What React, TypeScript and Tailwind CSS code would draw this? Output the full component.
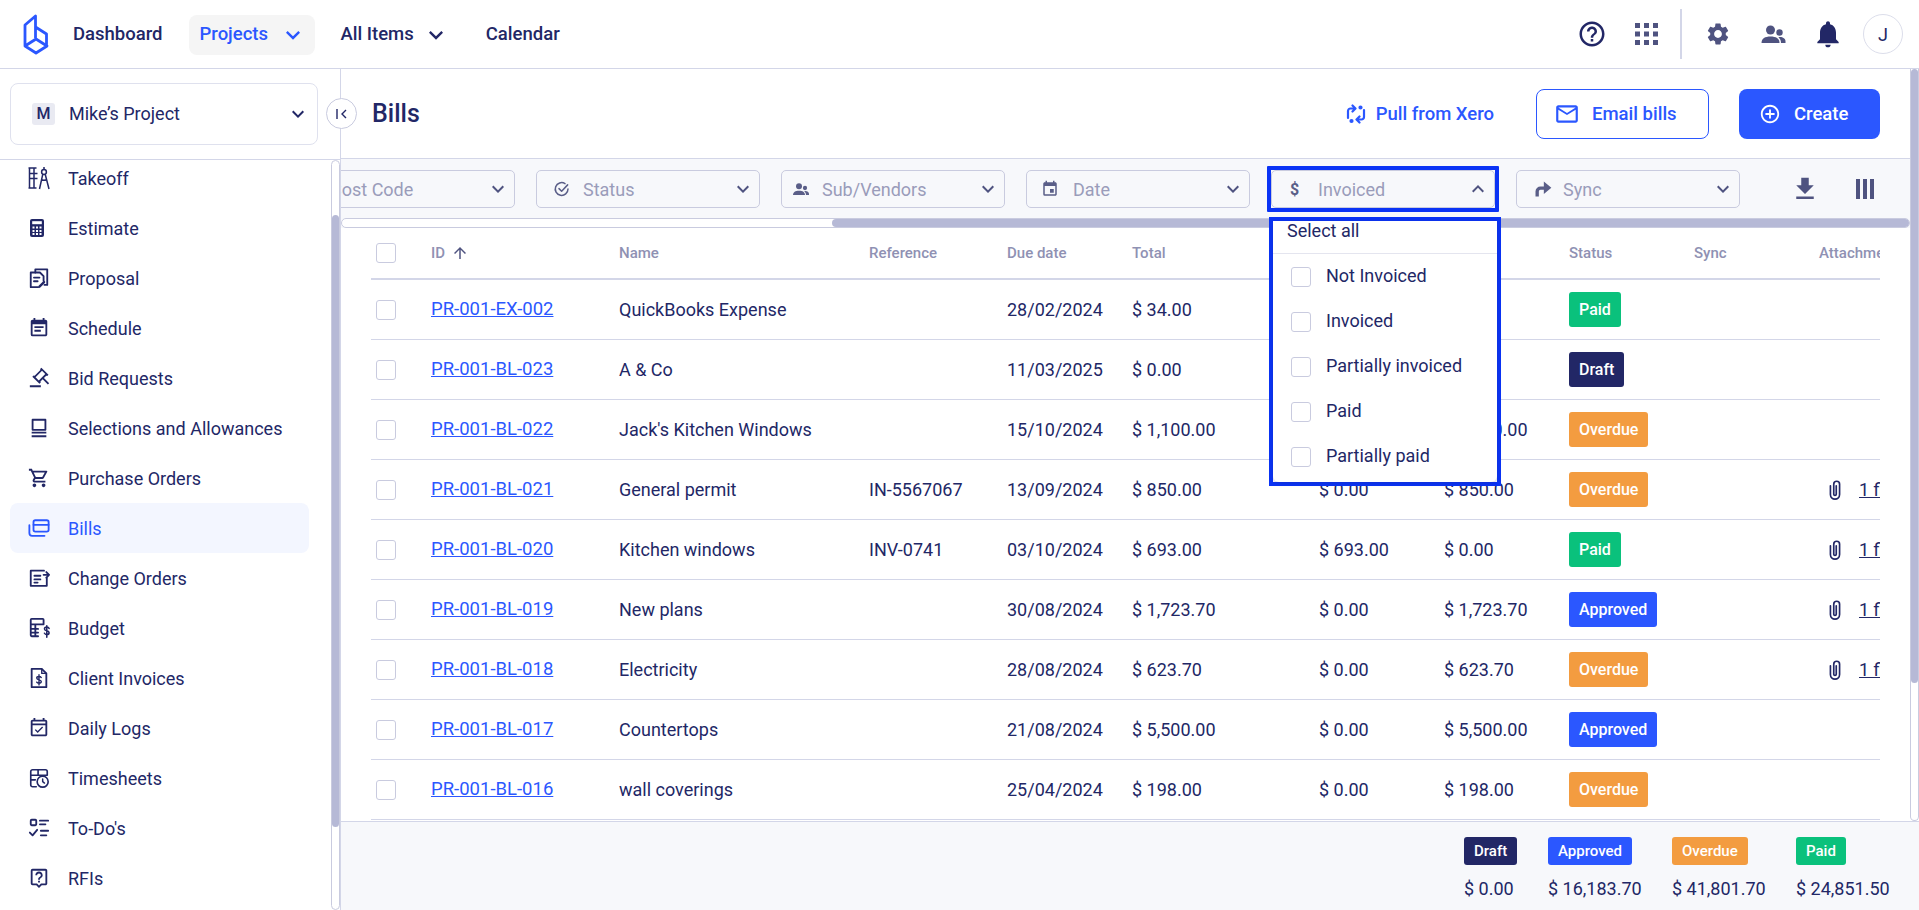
import type { ReactNode } from "react";
import {
  MdKeyboardArrowDown,
  MdKeyboardArrowUp,
  MdHelpOutline,
  MdSettings,
  MdNotifications,
  MdOutlineShoppingCart,
  MdEventNote,
  MdOutlineEventAvailable,
  MdOutlineLiveHelp,
  MdFileDownload,
  MdEvent,
  MdOutlineMailOutline,
  MdOutlineAddCircleOutline,
  MdArrowUpward,
} from "react-icons/md";
import { RiAuctionLine } from "react-icons/ri";

const Svg = ({ children, className = "h-[22px] w-[22px]" }: { children: ReactNode; className?: string }) => (
  <svg
    viewBox="0 0 24 24"
    fill="none"
    stroke="currentColor"
    strokeWidth="2"
    strokeLinecap="round"
    strokeLinejoin="round"
    className={className}
  >
    {children}
  </svg>
);

const TakeoffIcon = () => (
  <svg viewBox="0 0 24 24" fill="none" stroke="currentColor" strokeWidth="1.5" className="-ml-[1px] h-[24px] w-[24px]">
    <path d="M1.500 2h8M1.500 22h8M2.500 2v20M7 2v20M7 7.500h3.500M7 12.500h3.500M2.500 7.500H7M2.500 12.500H7" />
    <circle cx="17" cy="6" r="2.400" />
    <path d="M17 1v2.600M15.800 8.200L12.500 23M18.200 8.200L22 23M14.300 13.500c1.800 1 3.600 1 5.400 0" />
  </svg>
);
const EstimateIcon = () => (
  <svg viewBox="0 0 14 18" className="ml-[2px] h-[18px] w-[14px]">
    <rect width="14" height="18" rx="2" fill="currentColor" />
    <rect x="2.200" y="2.200" width="9.600" height="3" fill="#fff" />
    <path
      d="M2.500 7.500h2v2h-2zM6 7.500h2v2H6zM9.500 7.500h2v2h-2zM2.500 11h2v2h-2zM6 11h2v2H6zM9.500 11h2v2h-2zM2.500 14h2v2h-2zM6 14h2v2H6zM9.500 14h2v2h-2z"
      fill="#fff"
    />
  </svg>
);
const ProposalIcon = () => (
  <Svg>
    <path d="M8 6V2.500h13v17h-3" />
    <path d="M11 22H3V6h10l4 4v5" />
    <path d="M6.500 11.500h6M6.500 15.500h4" />
    <path d="M12.500 21.500l5-5" strokeWidth="2.600" />
  </Svg>
);
const SelectionsIcon = () => (
  <Svg>
    <path d="M5 3h14v11H5zM4 17h16M4 21h16" strokeLinecap="butt" />
  </Svg>
);
const BillsIcon = () => (
  <Svg>
    <rect x="6" y="3.500" width="16.500" height="12.500" rx="2" />
    <path d="M6 8.500h16.500M1.500 9v8.500a3 3 0 0 0 3 3H18" />
  </Svg>
);
const ChangeOrdersIcon = () => (
  <Svg>
    <path d="M20.500 12v8.500H3V4h14.500" />
    <path d="M7 9.500h6.500M7 13.500h6.500M7 17h3.500" />
    <path d="M23 8.500h-6m3-3l3 3-3 3" />
  </Svg>
);
const BudgetIcon = () => (
  <Svg>
    <path d="M11 21H4a1 1 0 0 1-1-1V3a1 1 0 0 1 1-1h12a1 1 0 0 1 1 1v5H3M3 13h8M3 17h8M8 8v13" />
    <path d="M23 12.500c-.5-1-1.500-1.500-2.500-1.500-1.400 0-2.500.8-2.500 2 0 2.800 5 1.400 5 4.200 0 1.200-1.100 2-2.500 2-1.100 0-2-.5-2.500-1.500M20.500 9.500V22" strokeWidth="1.700" />
  </Svg>
);
const InvoiceIcon = () => (
  <Svg>
    <path d="M4 2h11l5 5v15H4z" />
    <path d="M15 2v5h5" strokeWidth="1.500" />
    <path d="M14.500 11.500c-.5-.8-1.400-1.200-2.500-1.200-1.400 0-2.500.7-2.500 1.800 0 2.500 5 1.300 5 3.800 0 1.100-1.100 1.800-2.500 1.800-1.100 0-2-.4-2.500-1.200M12 8.500v11" strokeWidth="1.500" />
  </Svg>
);
const TimesheetIcon = () => (
  <Svg>
    <path d="M9 21.500H5a2 2 0 0 1-2-2V5a2 2 0 0 1 2-2h14a2 2 0 0 1 2 2v4H3M3 14h5M11 3v6" strokeWidth="1.800" />
    <circle cx="16" cy="16" r="6" strokeWidth="1.800" />
    <path d="M16 13v3l2 1.500" strokeWidth="1.600" />
  </Svg>
);
const TodoIcon = () => (
  <Svg>
    <rect x="3" y="3" width="6" height="6" rx="1" />
    <path d="M13 4h9M13 8h6M2 17l3 3 5-6M14 15h8M14 20h6" />
  </Svg>
);
const ClipIcon = () => (
  <svg viewBox="0 0 16 24" fill="none" stroke="currentColor" strokeWidth="2" strokeLinecap="round" className="h-[20px] w-[14px]">
    <path d="M2.500 7v10.500a5.500 5.500 0 0 0 11 0V5a3.500 3.500 0 0 0-7 0v12a1.500 1.500 0 0 0 3 0V7" />
  </svg>
);
const StatusCheck = () => (
  <Svg className="h-[18px] w-[18px]">
    <path d="M20 12a8.500 8.500 0 1 1-4-7.200" />
    <path d="M8 11.500l3.500 3.500 8-8.500" />
  </Svg>
);
const SyncArrow = () => (
  <svg viewBox="0 0 24 24" fill="currentColor" className="h-[20px] w-[20px]">
    <path d="M13 3l9 7.500-9 7.500v-5H9a2 2 0 0 0-2 2v6H3v-6a6 6 0 0 1 6-6h4z" />
  </svg>
);
const ColumnsIcon = () => (
  <svg viewBox="0 0 18 20" fill="currentColor" className="h-[20px] w-[18px]">
    <path d="M0 0h4v20H0zM7 0h4v20H7zM14 0h4v20h-4z" />
  </svg>
);
const XeroIcon = () => (
  <svg viewBox="0 0 20 20" fill="none" stroke="currentColor" strokeWidth="2.200" strokeLinecap="round" strokeLinejoin="round" className="h-[20px] w-[20px]">
    <path d="M2 14V7a2.500 2.500 0 0 1 2.500-2.500H9M6.500 1.500L9.500 4.500 6.500 7.500" />
    <path d="M18 6v7a2.500 2.500 0 0 1-2.500 2.500H11M13.500 12.500l-3 3 3 3" />
    <circle cx="14.500" cy="3.500" r="1" fill="currentColor" />
    <circle cx="5.500" cy="17" r="1" fill="currentColor" />
  </svg>
);
const PeopleIcon = ({ className }: { className: string }) => (
  <svg viewBox="0 0 24 18" fill="currentColor" className={className}>
    <circle cx="9" cy="5" r="4.500" />
    <path d="M0 18c0-4.500 3.500-6.500 9-6.500s9 2 9 6.500z" />
    <circle cx="18" cy="7.500" r="3.200" />
    <path d="M19.500 18c0-2.300-.8-4.500-2.700-5.800 3.600-.8 7.200 1 7.200 4V18z" />
  </svg>
);
const AppsIcon = () => (
  <svg viewBox="0 0 23 22" fill="currentColor" className="h-[22px] w-[23px]">
    <path d="M0 0h5v5H0zM9 0h5v5H9zM18 0h5v5h-5zM0 8.500h5v5H0zM9 8.500h5v5H9zM18 8.500h5v5h-5zM0 17h5v5H0zM9 17h5v5H9zM18 17h5v5h-5z" />
  </svg>
);
const Logo = () => (
  <svg viewBox="0 0 26 41" fill="none" stroke="#2b57ff" strokeWidth="2.800" strokeLinejoin="round" className="h-[41px] w-[26px]">
    <path d="M13 39L2 32l11-7 11 7zM2 32V11L12.500 2v22M12.500 13l11 7v12" />
  </svg>
);

const sideItems: { label: string; icon: ReactNode; active?: boolean }[] = [
  { label: "Takeoff", icon: <TakeoffIcon /> },
  { label: "Estimate", icon: <EstimateIcon /> },
  { label: "Proposal", icon: <ProposalIcon /> },
  { label: "Schedule", icon: <MdEventNote className="h-[22px] w-[22px]" /> },
  { label: "Bid Requests", icon: <RiAuctionLine className="h-[22px] w-[22px]" /> },
  { label: "Selections and Allowances", icon: <SelectionsIcon /> },
  { label: "Purchase Orders", icon: <MdOutlineShoppingCart className="h-[22px] w-[22px]" /> },
  { label: "Bills", icon: <BillsIcon />, active: true },
  { label: "Change Orders", icon: <ChangeOrdersIcon /> },
  { label: "Budget", icon: <BudgetIcon /> },
  { label: "Client Invoices", icon: <InvoiceIcon /> },
  { label: "Daily Logs", icon: <MdOutlineEventAvailable className="h-[22px] w-[22px]" /> },
  { label: "Timesheets", icon: <TimesheetIcon /> },
  { label: "To-Do's", icon: <TodoIcon /> },
  { label: "RFIs", icon: <MdOutlineLiveHelp className="h-[22px] w-[22px]" /> },
];

const badgeColors: Record<string, string> = {
  Paid: "bg-[#0ac17c]",
  Draft: "bg-[#222766]",
  Overdue: "bg-[#f39c40]",
  Approved: "bg-[#2b57ff]",
};

const rows = [
  { id: "PR-001-EX-002", name: "QuickBooks Expense", ref: "", due: "28/02/2024", total: "$ 34.00", paid: "", bal: "", status: "Paid", file: false },
  { id: "PR-001-BL-023", name: "A & Co", ref: "", due: "11/03/2025", total: "$ 0.00", paid: "", bal: "", status: "Draft", file: false },
  { id: "PR-001-BL-022", name: "Jack's Kitchen Windows", ref: "", due: "15/10/2024", total: "$ 1,100.00", paid: "", bal: "$ 1,100.00", status: "Overdue", file: false },
  { id: "PR-001-BL-021", name: "General permit", ref: "IN-5567067", due: "13/09/2024", total: "$ 850.00", paid: "$ 0.00", bal: "$ 850.00", status: "Overdue", file: true },
  { id: "PR-001-BL-020", name: "Kitchen windows", ref: "INV-0741", due: "03/10/2024", total: "$ 693.00", paid: "$ 693.00", bal: "$ 0.00", status: "Paid", file: true },
  { id: "PR-001-BL-019", name: "New plans", ref: "", due: "30/08/2024", total: "$ 1,723.70", paid: "$ 0.00", bal: "$ 1,723.70", status: "Approved", file: true },
  { id: "PR-001-BL-018", name: "Electricity", ref: "", due: "28/08/2024", total: "$ 623.70", paid: "$ 0.00", bal: "$ 623.70", status: "Overdue", file: true },
  { id: "PR-001-BL-017", name: "Countertops", ref: "", due: "21/08/2024", total: "$ 5,500.00", paid: "$ 0.00", bal: "$ 5,500.00", status: "Approved", file: false },
  { id: "PR-001-BL-016", name: "wall coverings", ref: "", due: "25/04/2024", total: "$ 198.00", paid: "$ 0.00", bal: "$ 198.00", status: "Overdue", file: false },
];

const totals = [
  { label: "Draft", value: "$ 0.00", width: "w-[54px]" },
  { label: "Approved", value: "$ 16,183.70", width: "w-[94px]" },
  { label: "Overdue", value: "$ 41,801.70", width: "w-[94px]" },
  { label: "Paid", value: "$ 24,851.50", width: "w-[94px]" },
];

const Checkbox = () => (
  <span className="block h-[20px] w-[20px] rounded-[3px] border border-[#c9cbdf] bg-white" />
);

function FilterSelect({
  label,
  icon,
  open,
  iconBox = "w-[30px]",
}: {
  label: string;
  icon?: ReactNode;
  open?: boolean;
  iconBox?: string;
}) {
  const box = (
    <div className="flex h-[38px] w-[224px] shrink-0 items-center rounded-[5px] border border-[#c9cbdf] bg-[#f7f8fb] pr-[4px] pl-[16px]">
      <span className={`flex shrink-0 text-[#5a5e88] ${iconBox}`}>{icon}</span>
      <span className="mt-[2px] flex-1 text-[18px] text-[#9a9cba]">{label}</span>
      {open ? (
        <MdKeyboardArrowUp className="mt-[1px] h-[24px] w-[24px] text-[#4f5380]" />
      ) : (
        <MdKeyboardArrowDown className="mt-[1px] h-[24px] w-[24px] text-[#4f5380]" />
      )}
    </div>
  );
  if (!open) return box;
  return <div className="-mx-[4px] shrink-0 rounded-[1px] border-4 border-[#0a33f5]">{box}</div>;
}

export default function App() {
  return (
    <div className="flex h-[910px] w-[1919px] flex-col overflow-hidden bg-white font-['Roboto',sans-serif] text-[#222766]">
      {/* top bar */}
      <header className="flex h-[69px] shrink-0 items-center border-b border-[#d3d6e8] pr-[16px] pl-[23px]">
        <Logo />
        <nav className="mt-[1px] ml-[24px] flex items-center text-[18.5px] font-medium">
          <span>Dashboard</span>
          <span className="ml-[26px] flex h-[40px] w-[126px] items-center rounded-[8px] bg-[#f5f5f5] pl-[11px] text-[#2b57ff]">
            Projects
            <MdKeyboardArrowDown className="ml-[11px] h-[28px] w-[28px]" />
          </span>
          <span className="ml-[26px] flex items-center">
            All Items
            <MdKeyboardArrowDown className="ml-[8px] h-[28px] w-[28px]" />
          </span>
          <span className="ml-[36px]">Calendar</span>
        </nav>
        <div className="ml-auto flex items-center">
          <MdHelpOutline className="h-[30px] w-[30px]" />
          <span className="ml-[28px] text-[#4f5380]"><AppsIcon /></span>
          <span className="mr-[23px] ml-[22px] h-[50px] w-[2px] bg-[#d3d6e8]" />
          <MdSettings className="h-[26px] w-[26px] text-[#4f5380]" />
          <span className="ml-[30px] text-[#4f5380]"><PeopleIcon className="h-[18px] w-[25px]" /></span>
          <MdNotifications className="ml-[26px] h-[32px] w-[32px]" />
          <span className="ml-[19px] flex h-[40px] w-[40px] items-center justify-center rounded-full border border-[#dcdeeb] text-[18px]">
            J
          </span>
        </div>
      </header>

      <div className="flex min-h-0 flex-1">
        {/* sidebar */}
        <aside className="flex w-[341px] shrink-0 flex-col border-r border-[#d3d6e8]">
          <div className="h-[91px] shrink-0 border-b border-[#d3d6e8] pt-[14px] pr-[22px] pl-[10px]">
            <div className="flex h-[62px] items-center rounded-[8px] border border-[#dfe1ee] pr-[7px] pl-[21px]">
              <span className="flex h-[22px] w-[23px] items-center justify-center rounded-[3px] bg-[#e9eaf2] text-[16px] font-medium">
                M
              </span>
              <span className="ml-[14px] flex-1 pb-[2px] text-[18px]">Mike’s Project</span>
              <MdKeyboardArrowDown className="h-[24px] w-[24px]" />
            </div>
          </div>
          <div className="flex min-h-0 flex-1">
            <div className="min-w-0 flex-1 overflow-hidden pl-[10px]">
              <div className="-mt-[7px] flex flex-col">
                {sideItems.map((item) => (
                  <div
                    key={item.label}
                    className={`flex h-[50px] w-[299px] shrink-0 items-center rounded-[8px] pl-[18px] text-[18px] ${
                      item.active ? "bg-[#f3f6ff] text-[#2b57ff]" : ""
                    }`}
                  >
                    <span className="flex w-[40px] shrink-0">{item.icon}</span>
                    {item.label}
                  </div>
                ))}
              </div>
            </div>
            {/* scrollbar */}
            <div className="flex w-[9px] shrink-0 flex-col rounded-full border border-[#c9cbdf]">
              <div className="mt-[54px] h-[612px] rounded-full bg-[#b6b9d6]" />
            </div>
          </div>
        </aside>

        {/* main */}
        <main className="relative flex min-w-0 flex-1 flex-col">
          <span className="absolute top-[29px] -left-[15px] z-10 flex h-[31px] w-[31px] items-center justify-center rounded-full border border-[#c9cbdf] bg-white">
            <svg viewBox="0 0 16 16" fill="none" stroke="currentColor" strokeWidth="1.400" className="h-[16px] w-[16px]">
              <path d="M3 3v10M12 4L8 8l4 4" />
            </svg>
          </span>

          <div className="flex min-h-0 flex-1">
            <div className="flex min-w-0 flex-1 flex-col">
              <div className="flex h-[90px] shrink-0 items-center border-b border-[#d3d6e8] pr-[30px] pl-[31px]">
                <h1 className="mt-[1px] text-[25px] font-medium">Bills</h1>
                <span className="ml-auto flex items-center text-[18.5px] font-medium text-[#2b57ff]">
                  <XeroIcon />
                  <span className="mt-[2px] ml-[10px]">Pull from Xero</span>
                </span>
                <button className="ml-[42px] flex h-[50px] w-[173px] items-center rounded-[8px] border border-[#2b57ff] pl-[17px] text-[18.5px] font-medium text-[#2b57ff]">
                  <MdOutlineMailOutline className="h-[26px] w-[26px]" />
                  <span className="mt-[2px] ml-[12px]">Email bills</span>
                </button>
                <button className="ml-[30px] flex h-[50px] w-[141px] items-center rounded-[8px] bg-[#2b57ff] pl-[20px] text-[18.5px] font-medium text-white">
                  <MdOutlineAddCircleOutline className="h-[22px] w-[22px]" />
                  <span className="mt-[2px] ml-[13px]">Create</span>
                </button>
              </div>

              {/* filters, scrolled sideways */}
              <div className="h-[69px] shrink-0 overflow-hidden bg-[#f7f8fb]">
                <div className="-ml-[50px] flex h-[59px] items-center gap-[21px]">
                  <FilterSelect label="Cost Code" iconBox="w-[22px]" />
                  <FilterSelect label="Status" icon={<StatusCheck />} />
                  <FilterSelect label="Sub/Vendors" iconBox="w-[24px]" icon={<PeopleIcon className="-ml-[5px] h-[12px] w-[16px]" />} />
                  <FilterSelect label="Date" icon={<MdEvent className="-ml-[2px] h-[18px] w-[18px]" />} />
                  <FilterSelect label="Invoiced" icon={<span className="mt-[2px] ml-[2px] text-[16px] font-bold">$</span>} open />
                  <FilterSelect label="Sync" icon={<SyncArrow />} />
                  <span className="ml-[29px] flex shrink-0 items-center gap-[36px] text-[#4f5380]">
                    <MdFileDownload className="h-[30px] w-[30px]" />
                    <ColumnsIcon />
                  </span>
                </div>
                <div className="h-[10px] rounded-full border border-[#c9cbdf] bg-white">
                  <div className="ml-[490px] h-full rounded-full bg-[#b6b9d6]" />
                </div>
              </div>

              {/* table */}
              <div className="mx-[30px] min-h-0 flex-1 overflow-hidden">
                <div className="w-[1650px]">
                  <div className="flex h-[52px] items-center border-b-2 border-[#d3d6e8] text-[15px] font-medium text-[#8f91b3]">
                    <span className="w-[60px] pl-[5px]"><Checkbox /></span>
                    <span className="flex w-[188px] items-center gap-[6px]">
                      ID <MdArrowUpward className="h-[18px] w-[18px] text-[#4f5380]" />
                    </span>
                    <span className="w-[250px]">Name</span>
                    <span className="w-[138px]">Reference</span>
                    <span className="w-[125px]">Due date</span>
                    <span className="w-[437px]">Total</span>
                    <span className="w-[125px]">Status</span>
                    <span className="w-[125px]">Sync</span>
                    <span className="w-[125px] whitespace-nowrap">Attachments</span>
                  </div>
                  {rows.map((r) => (
                    <div key={r.id} className="flex h-[60px] items-center border-b border-[#d3d6e8] text-[18px]">
                      <span className="w-[60px] pl-[5px]"><Checkbox /></span>
                      <span className="w-[188px] text-[18.5px] text-[#2b57ff] underline">{r.id}</span>
                      <span className="w-[250px]">{r.name}</span>
                      <span className="w-[138px]">{r.ref}</span>
                      <span className="w-[125px]">{r.due}</span>
                      <span className="w-[187px]">{r.total}</span>
                      <span className="w-[125px]">{r.paid}</span>
                      <span className="w-[125px]">{r.bal}</span>
                      <span className="w-[125px]">
                        <span className={`inline-flex h-[35px] items-center rounded-[3px] px-[10px] text-[16px] font-medium text-white ${badgeColors[r.status]}`}>
                          {r.status}
                        </span>
                      </span>
                      <span className="w-[125px]" />
                      {r.file ? (
                        <span className="flex w-[125px] items-center whitespace-nowrap pl-[9px]">
                          <ClipIcon />
                          <span className="ml-[17px] underline">1 file</span>
                        </span>
                      ) : (
                        <span className="w-[125px]" />
                      )}
                    </div>
                  ))}
                </div>
              </div>
            </div>

            {/* page scrollbar */}
            <div className="h-[752px] w-[9px] shrink-0 rounded-b-full border-x border-b border-[#c9cbdf]">
              <div className="h-[614px] rounded-full bg-[#b6b9d6]" />
            </div>
          </div>

          {/* totals */}
          <div className="flex h-[89px] shrink-0 justify-end gap-[30px] border-t border-[#d3d6e8] bg-[#f7f8fb] pt-[15px] pr-[29px]">
            {totals.map((t) => (
              <div key={t.label} className={`flex flex-col items-start ${t.width}`}>
                <span className={`flex h-[28px] items-center rounded-[3px] px-[10px] text-[15px] font-medium text-white ${badgeColors[t.label]}`}>
                  {t.label}
                </span>
                <span className="mt-[10px] text-[18px] whitespace-nowrap">{t.value}</span>
              </div>
            ))}
          </div>

          {/* invoiced dropdown */}
          <div className="absolute top-[148px] left-[928px] z-20 h-[269px] w-[232px] border-4 border-[#0a33f5] bg-white">
            <div className="h-full rounded-b-[6px] shadow-[0_1px_4px_rgba(34,39,102,0.25)]">
              <div className="flex h-[33px] items-center border-b border-[#e4e5ef] pb-[14px] pl-[14px] text-[18px]">
                Select all
              </div>
              <div className="flex flex-col">
                {["Not Invoiced", "Invoiced", "Partially invoiced", "Paid", "Partially paid"].map((o) => (
                  <div key={o} className="flex h-[45px] items-center pl-[18px] text-[18px]">
                    <Checkbox />
                    <span className="mb-[2px] ml-[15px]">{o}</span>
                  </div>
                ))}
              </div>
            </div>
          </div>
        </main>
      </div>
    </div>
  );
}
